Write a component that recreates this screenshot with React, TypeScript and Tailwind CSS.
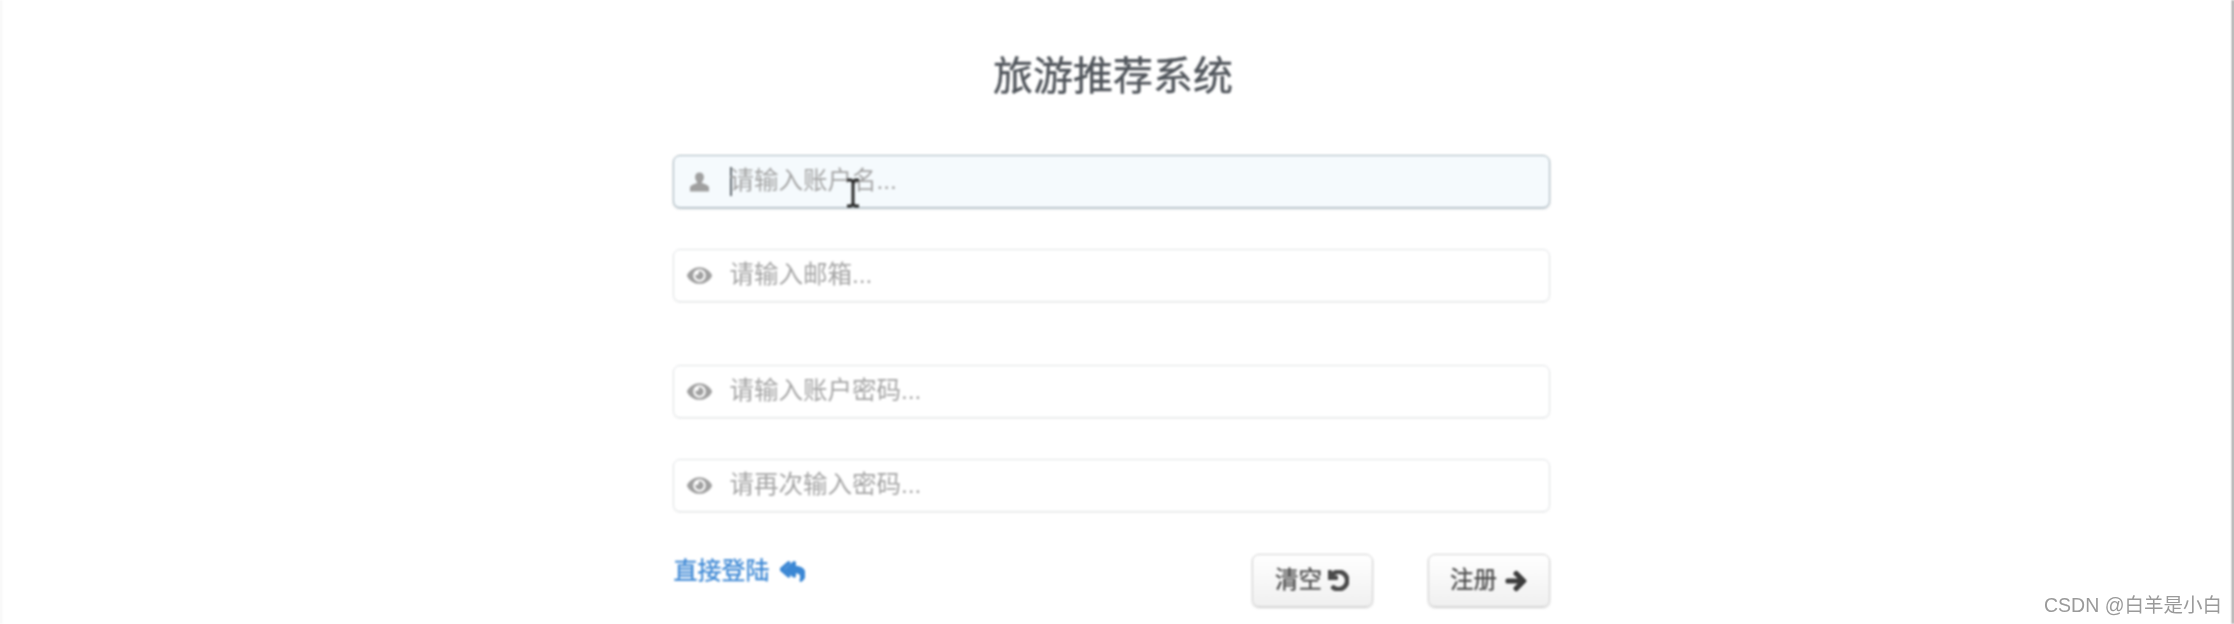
import { FaEye, FaReplyAll, FaUndo, FaArrowRight } from "react-icons/fa";

const FONT = "[font-family:'Liberation_Sans','Noto_Sans_CJK_SC',sans-serif]";

function UserGlyph() {
  return (
    <svg width="21" height="20" viewBox="0 0 21 20" fill="currentColor">
      <path d="M10.5 0.5c-2.8 0-4.4 2-4.4 4.6 0 2 .8 3.8 2 4.8v1.2c-3 .9-6.4 2.3-7.1 4v4.4h19v-4.4c-.7-1.7-4.1-3.1-7.1-4V9.900c1.200-1 2-2.800 2-4.800 0-2.600-1.600-4.600-4.400-4.600z" />
    </svg>
  );
}

function Field({ text, icon, focused, className }: { text: string; icon: React.ReactNode; focused?: boolean; className: string }) {
  return (
    <div
      className={
        "relative flex h-[53px] w-[877px] items-center rounded-[7px] border " +
        (focused
          ? "border-[#a9b8bf] bg-[#f5fafd] shadow-[0_1px_2px_rgba(120,140,150,0.45)] "
          : "border-[#e0e3e5] bg-white shadow-[0_1px_2px_rgba(0,0,0,0.05)] ") +
        className
      }
    >
      <span className="flex w-[56px] shrink-0 justify-center pr-[4px] text-[#a0a0a0]">{icon}</span>
      {focused && <span className="mr-[-2px] h-[29px] w-[2px] bg-[#60686e]" />}
      <span className="text-[24.5px] leading-none text-[#a4a4a4]">{text}</span>
      {focused && (
        <svg className="absolute left-[171px] top-[22px]" width="16" height="30" viewBox="0 0 16 30" fill="none">
          <path d="M2 2h4l2 2 2-2h4M8 4v22M2 28h4l2-2 2 2h4" stroke="#2b2b2b" strokeWidth="3" />
        </svg>
      )}
    </div>
  );
}

export default function App() {
  return (
    <div className={"flex h-[624px] w-[2234px] flex-col items-center bg-white " + FONT}>
      <div className="flex h-full w-full flex-col items-center border-l-2 border-r-2 border-l-[#f6f6f6] border-r-[#8d8d8d] pr-[12px] blur-[0.8px]">
        <h1 className="mt-[52px] pl-[4px] text-[40px] font-normal leading-[48px] text-[#50555b] [-webkit-text-stroke:0.4px_#50555b]">旅游推荐系统</h1>
        <Field className="mt-[55px]" focused text="请输入账户名..." icon={<UserGlyph />} />
        <Field className="mt-[41px]" text="请输入邮箱..." icon={<FaEye size={25} />} />
        <Field className="mt-[63px]" text="请输入账户密码..." icon={<FaEye size={25} />} />
        <Field className="mt-[41px]" text="请再次输入密码..." icon={<FaEye size={25} />} />
        <div className="mt-[41px] flex w-[877px] items-start">
          <a className="ml-[1px] mt-[2px] flex items-center gap-[10px] text-[24px] leading-[32px] text-[#3b87d4] [-webkit-text-stroke:0.3px_#3b87d4]">
            直接登陆 <FaReplyAll size={25} className="[stroke-width:30]" />
          </a>
          <button className="ml-auto mt-[1px] flex h-[53px] w-[121px] items-center justify-center gap-[6px] rounded-[7px] border border-[#d2d2d2] bg-gradient-to-b from-white to-[#f0f0f0] text-[23.5px] text-[#4a4a4a] shadow-[0_1px_2px_rgba(0,0,0,0.18)] [-webkit-text-stroke:0.3px_#4a4a4a]">
            清空 <FaUndo size={21} className="[stroke-width:40]" />
          </button>
          <button className="ml-[55px] mt-[1px] flex h-[53px] w-[122px] items-center justify-center gap-[8px] rounded-[7px] border border-[#d2d2d2] bg-gradient-to-b from-white to-[#f0f0f0] text-[23.5px] text-[#4a4a4a] shadow-[0_1px_2px_rgba(0,0,0,0.18)] [-webkit-text-stroke:0.3px_#4a4a4a]">
            注册 <FaArrowRight size={22} className="text-[#3c3c3c] [stroke-width:40]" />
          </button>
        </div>
      </div>
      <span className="fixed bottom-[7px] right-[12px] text-[19.5px] leading-[24px] text-[#9a9a9a]">CSDN @白羊是小白</span>
    </div>
  );
}
